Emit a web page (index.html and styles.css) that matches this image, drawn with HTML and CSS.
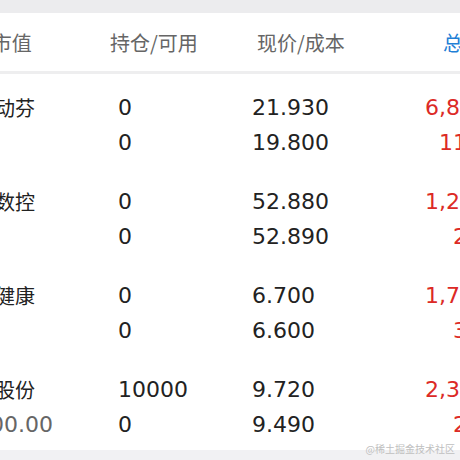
FILE: index.html
```html
<!DOCTYPE html>
<html lang="zh-CN">
<head>
<meta charset="utf-8">
<title>持仓</title>
<link rel="stylesheet" href="styles.css">
</head>
<body>
<div class="screen">
  <div class="topbar"></div>
  <div class="viewport">
    <div class="table">
      <div class="head">
        <span>名称/市值</span>
        <span>持仓/可用</span>
        <span>现价/成本</span>
        <span class="blue">总盈亏</span>
      </div>
      <div class="sep"></div>

      <div class="group">
        <div class="line"><span class="name">普利动芬</span><span>0</span><span>21.930</span><span class="red">6,880.00</span></div>
        <div class="line"><span class="mv">0.00</span><span>0</span><span>19.800</span><span class="red">11.56%</span></div>
      </div>

      <div class="group">
        <div class="line"><span class="name">华中数控</span><span>0</span><span>52.880</span><span class="red">1,246.00</span></div>
        <div class="line"><span class="mv">0.00</span><span>0</span><span>52.890</span><span class="red">2.35%</span></div>
      </div>

      <div class="group">
        <div class="line"><span class="name">美年健康</span><span>0</span><span>6.700</span><span class="red">1,760.00</span></div>
        <div class="line"><span class="mv">0.00</span><span>0</span><span>6.600</span><span class="red">3.12%</span></div>
      </div>

      <div class="group">
        <div class="line"><span class="name">中国股份</span><span>10000</span><span>9.720</span><span class="red">2,300.00</span></div>
        <div class="line"><span class="mv visible">9,700.00</span><span>0</span><span>9.490</span><span class="red">2.42%</span></div>
      </div>
    </div>
  </div>
  <div class="bottombar"></div>
  <div class="watermark">@稀土掘金技术社区</div>
</div>
</body>
</html>
```

FILE: styles.css
```css
* { box-sizing: border-box; }
html, body { margin: 0; padding: 0; background: #ffffff; }
.screen {
  position: relative;
  width: 460px;
  height: 460px;
  overflow: hidden;
  font-family: "DejaVu Sans", "Noto Sans CJK SC", sans-serif;
  display: flex;
  flex-direction: column;
}
.topbar { height: 13px; background: #ececee; flex: none; }
.viewport { flex: none; height: 437px; overflow: hidden; background: #fff; }
.table { width: 600px; margin-left: -56px; }
.head {
  height: 58px;
  display: grid;
  grid-template-columns: 166px 147px 186px 1fr;
  align-items: center;
  font-family: "Noto Sans CJK SC", sans-serif;
  font-size: 20px;
  color: #666666;
}
.head .blue { color: #1f7fd6; }
.sep { height: 3px; background: #eeeeef; }
.group { padding: 16px 0 8px 11px; }
.line {
  height: 35px;
  display: grid;
  grid-template-columns: 163px 134px 140px 131px;
  align-items: center;
  font-size: 22px;
  color: #222222;
  white-space: nowrap;
}
.line .name { font-family: "Noto Sans CJK SC", sans-serif; font-size: 20px; color: #222; }
.line .mv { color: #666666; visibility: hidden; }
.line .mv.visible { visibility: visible; }
.line .red { color: #dc2a26; text-align: right; }
.bottombar { flex: 1; background: #f1f1f3; }
.watermark {
  position: absolute;
  right: 5px;
  bottom: 4px;
  font-family: "Noto Sans CJK SC", serif;
  font-size: 10px;
  color: #c0c0c0;
}
```
